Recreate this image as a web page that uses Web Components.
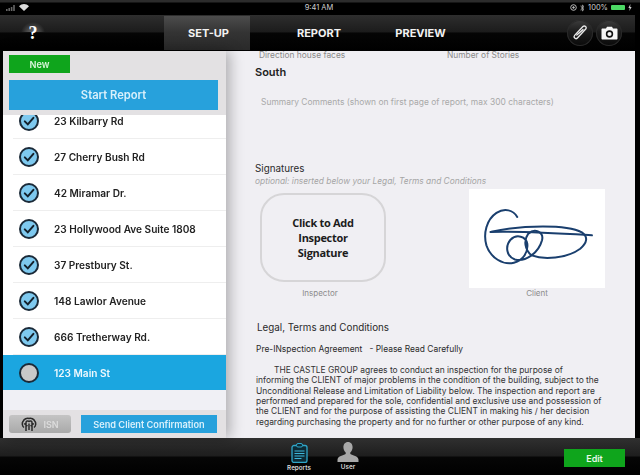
<!DOCTYPE html>
<html>
<head>
<meta charset="utf-8">
<style>
  html, body { margin: 0; height: 100%; background: #000; overflow: hidden; }
  body { font-family: Inter, "Liberation Sans", sans-serif; }
</style>
</head>
<body>
<inspection-app></inspection-app>
<script>
class StatusBar extends HTMLElement {
  constructor() {
    super();
    this.attachShadow({ mode: 'open' });
    this.shadowRoot.innerHTML = /* html */ `
    <style>
      :host {
        display: grid;
        grid-template-columns: 1fr auto 1fr;
        align-items: center;
        height: 15px;
        padding: 0 8px 0 6px;
        box-sizing: border-box;
        background: linear-gradient(#2c2c2c 0, #2c2c2c 2px, #000 3px);
        color: #cfcfcf;
        font-size: 7.5px;
      }
      .left, .right { display: flex; align-items: center; }
      .left { gap: 2px; }
      .right { justify-content: flex-end; gap: 3px; }
      .batt { width: 14px; height: 5px; background: #4cd964; border-radius: 1px; }
    </style>
    <div class="left">
      <svg width="11" height="6" viewBox="0 0 11 6" fill="#666"><rect x="0" y="4" width="1.6" height="2"/><rect x="2.4" y="3" width="1.6" height="3"/><rect x="4.8" y="2" width="1.6" height="4"/><rect x="7.2" y="0" width="1.6" height="6"/></svg>
      <svg width="10" height="7" viewBox="0 0 10 7"><path d="M5 7 0 2.2C3-.7 7-.7 10 2.2Z" fill="#ddd"/></svg>
    </div>
    <span>9:41 AM</span>
    <div class="right">
      <svg width="7" height="7" viewBox="0 0 7 7" fill="none" stroke="#bbb"><circle cx="3.5" cy="3.5" r="2.8"/><circle cx="3.5" cy="3.5" r=".8" fill="#bbb"/></svg>
      <svg width="5" height="8" viewBox="0 0 5 8" fill="none" stroke="#bbb" stroke-width=".8"><path d="M.5 2 4 5.4 2.3 7V1L4 2.6.5 6"/></svg>
      <span>100%</span>
      <div class="batt"></div>
      <svg width="4" height="7" viewBox="0 0 4 7" fill="#ccc"><path d="M2.4 0 .4 4h1.3L1.4 7 3.6 3H2.2Z"/></svg>
    </div>
    `;
  }
}
customElements.define('status-bar', StatusBar);

class NavBar extends HTMLElement {
  constructor() {
    super();
    this.attachShadow({ mode: 'open' });
    this.shadowRoot.innerHTML = /* html */ `
    <style>
      :host {
        display: flex;
        align-items: stretch;
        height: 36px;
        margin-right: 5px;
        background: linear-gradient(#2e2e2e 0, #1c1c1c 47%, #050505 50%, #000 100%);
        color: #f2f2f2;
        font-size: 11px;
        font-weight: 700;
      }
      .help {
        width: 66px;
        display: flex;
        align-items: center;
        justify-content: center;
        padding-top: 1px;
        box-sizing: border-box;
        color: #fff;
        font: bold 18px "Liberation Serif", serif;
        background: radial-gradient(ellipse 12px 11px at 50% 18px, #6a6a6a 0, #444 55%, transparent 100%) no-repeat 0 0 / 100% 17px;
      }
      .tabs { display: flex; margin-left: 98px; padding-top: 1px; }
      .tab {
        display: flex;
        align-items: center;
        justify-content: center;
        height: 34px;
      }
      .on { width: 86px; padding-left: 3px; box-sizing: border-box; background: linear-gradient(#4c4c4c, #333 50%, #2a2a2a); }
      .report { width: 138px; }
      .preview { width: 65px; }
      .tools { margin-left: auto; display: flex; align-items: center; gap: 3px; padding-right: 13px; }
      .round {
        width: 26px;
        height: 26px;
        border-radius: 50%;
        background: linear-gradient(#3d3d3d, #1c1c1c 45%, #0a0a0a);
        box-shadow: inset 0 0 0 1px #2a2a2a;
        display: flex;
        align-items: center;
        justify-content: center;
      }
    </style>
    <div class="help">?</div>
    <div class="tabs">
      <div class="tab on">SET-UP</div>
      <div class="tab report">REPORT</div>
      <div class="tab preview">PREVIEW</div>
    </div>
    <div class="tools">
      <div class="round">
        <svg width="18" height="18" viewBox="0 0 18 18" fill="none" stroke="#e8e8e8" stroke-width="1.4" stroke-linecap="round"><path d="M12.6 2.8 3.4 10.8c-1.900 1.700.5 4.500 2.500 2.800l9.200-8c1.700-1.500-.6-4.100-2.500-2.800Z" transform="rotate(-6 9 9)"/><path d="M5.800 11 12 5.600"/></svg>
      </div>
      <div class="round">
        <svg width="17" height="14" viewBox="0 0 17 14"><path d="M1.500 2.500H5L6 .8h5l1 1.700h3.500c.6 0 1 .4 1 1v9c0 .6-.4 1-1 1h-14c-.6 0-1-.4-1-1v-9c0-.6.4-1 1-1Z" fill="#f6f6f6"/><circle cx="8.500" cy="8" r="3.700" fill="#111"/><circle cx="8.500" cy="8" r="2.100" fill="#f6f6f6"/></svg>
      </div>
    </div>
    `;
  }
}
customElements.define('nav-bar', NavBar);

class AddressRow extends HTMLElement {
  constructor() {
    super();
    this.attachShadow({ mode: 'open' });
    this.shadowRoot.innerHTML = /* html */ `
    <style>
      :host {
        display: flex;
        align-items: center;
        height: 36px;
        flex: none;
        box-sizing: border-box;
        padding-left: 16px;
        gap: 15px;
        position: relative;
        font-size: 10.1px;
        font-weight: 600;
        color: #222;
      }
      :host::after {
        content: "";
        position: absolute;
        left: 10px;
        right: 0;
        bottom: 0;
        height: 1px;
        background: #eeeeee;
      }
      :host([active]) { background: #1ba6e0; color: #eef8fd; height: 35px; }
      :host([active])::after { display: none; }
      svg { flex: none; }
    </style>
    <svg width="20" height="20" viewBox="0 0 20 20">
      <circle cx="10" cy="10" r="9" fill="${this.hasAttribute('active') ? '#c9c9c9' : '#7ec9ef'}" stroke="#1b2a38" stroke-width="2"/>
      ${this.hasAttribute('active') ? '' : '<path d="M5.800 10.400 8.800 13.400 14.400 6.800" fill="none" stroke="#14212c" stroke-width="2" stroke-linecap="round"/>'}
    </svg>
    <slot></slot>
    `;
  }
}
customElements.define('address-row', AddressRow);

class ReportSidebar extends HTMLElement {
  constructor() {
    super();
    this.attachShadow({ mode: 'open' });
    this.shadowRoot.innerHTML = /* html */ `
    <style>
      :host {
        display: flex;
        flex-direction: column;
        width: 223px;
        flex: none;
        background: #e3e1e3;
        box-shadow: 4px 0 13px rgba(0, 0, 0, 0.28);
        position: relative;
        font-weight: 600;
      }
      .head { padding: 4px 8px 5px 6px; height: 64px; box-sizing: border-box; }
      .new {
        width: 61px;
        height: 18px;
        background: #0fa51c;
        color: #d8f5da;
        font-size: 9.2px;
        display: flex;
        align-items: center;
        justify-content: center;
      }
      .start {
        margin-top: 7px;
        height: 30px;
        background: #27a1dc;
        color: #d9f0fb;
        font-size: 11.2px;
        display: flex;
        align-items: center;
        justify-content: center;
      }
      .list {
        height: 295px;
        background: #f0f0f5;
        overflow: hidden;
        display: flex;
        flex-direction: column;
      }
      .rows { background: #fff; margin-top: -12px; }
      .foot {
        flex: 1;
        display: flex;
        align-items: center;
        gap: 10px;
        padding: 0 9px 0 6px;
      }
      .isn {
        width: 62px;
        height: 18px;
        border-radius: 3px;
        background: linear-gradient(#c4c4c4, #a9a9a9);
        color: #dcdcdc;
        font-size: 9px;
        display: flex;
        align-items: center;
        justify-content: center;
        gap: 6px;
      }
      .send {
        flex: 1;
        height: 18px;
        background: #27a1dc;
        color: #d9f0fb;
        font-size: 9.2px;
        white-space: nowrap;
        display: flex;
        align-items: center;
        justify-content: center;
      }
    </style>
    <div class="head">
      <div class="new">New</div>
      <div class="start">Start Report</div>
    </div>
    <div class="list"><div class="rows"><slot></slot></div></div>
    <div class="foot">
      <div class="isn">
        <svg width="16" height="15" viewBox="0 0 16 15" fill="none" stroke="#2a2a2a" stroke-width="1.5"><path d="M3 10.500C1 9 .8 6 2 4.500 3 2 6 .8 8 1.500 10 .8 13 2 14 4.500 15.200 6 15 9 13 10.500"/><path d="M5 14V5.500C5 3.800 7 3.500 8 4.500 9 3.500 11 3.800 11 5.500V14M8 13V6.500M3 6.500 6.500 9M13 6.500 9.500 9"/></svg>
        <span>ISN</span>
      </div>
      <div class="send">Send Client Confirmation</div>
    </div>
    `;
  }
}
customElements.define('report-sidebar', ReportSidebar);

class SignatureBoxes extends HTMLElement {
  constructor() {
    super();
    this.attachShadow({ mode: 'open' });
    this.shadowRoot.innerHTML = /* html */ `
    <style>
      :host {
        display: flex;
        align-items: flex-start;
        margin-top: 2px;
        padding-left: 34px;
        color: #8b8b8b;
        font-size: 8px;
        line-height: 10px;
        text-align: center;
      }
      .col { display: flex; flex-direction: column; align-items: center; }
      .ins { width: 126px; margin-top: 4px; }
      .cli { width: 136px; margin-left: 83px; }
      .add {
        width: 126px;
        height: 89px;
        box-sizing: border-box;
        border: 2px solid #d6d5d7;
        border-radius: 24px;
        display: flex;
        align-items: center;
        justify-content: center;
        color: #1c1c1c;
        font: bold 11px/15px "Open Sans", sans-serif;
        letter-spacing: -0.3px;
      }
      .sig { width: 136px; height: 99px; background: #fff; display: block; }
      .ins span { margin-top: 6px; padding-right: 6px; }
    </style>
    <div class="col ins">
      <div class="add">Click to Add<br>Inspector<br>Signature</div>
      <span>Inspector</span>
    </div>
    <div class="col cli">
      <svg class="sig" viewBox="718 117 406 295" fill="none" stroke="#1a3f6e" stroke-width="6" stroke-linecap="round">
        <path d="M862 200C850 180 825 172 800 188 770 208 760 250 770 285 782 322 820 345 852 337 880 330 895 305 892 280 888 258 860 250 842 268 825 288 830 318 855 327 885 335 925 310 936 270 942 245 915 232 895 250 880 270 885 300 905 315 940 328 1010 325 1050 295 1070 278 1075 260 1055 246 1010 222 880 224 785 244"/>
        <path d="M782 245C870 242 1000 250 1085 255"/>
      </svg>
      <span>Client</span>
    </div>
    `;
  }
}
customElements.define('signature-boxes', SignatureBoxes);

class SetupForm extends HTMLElement {
  constructor() {
    super();
    this.attachShadow({ mode: 'open' });
    this.shadowRoot.innerHTML = /* html */ `
    <style>
      :host {
        display: block;
        flex: 1;
        background: #f0eff3;
        overflow: hidden;
        color: #2a2a2a;
      }
      .clip { display: flex; margin: 0 0 0 33px; height: 10px; line-height: 10px; font-size: 8.4px; color: #8a8a8a; transform: translateY(-1px); overflow: hidden; }
      .clip span { width: 188px; }
      .south { margin: 4px 0 0 29px; font-size: 11px; font-weight: 600; line-height: 14px; color: #222; }
      .summary { margin: 17px 0 0 35px; font-size: 8.45px; line-height: 12px; color: #a9a9a9; }
      .sig-title { margin: 54px 0 0 29px; font-size: 9.8px; line-height: 13px; }
      .optional { margin: 0 0 0 29px; font-size: 8.4px; line-height: 12px; font-style: italic; color: #a5a5a5; }
      .legal { margin: 23px 0 0 31px; font-size: 9.8px; line-height: 14px; }
      .pre { margin: 8px 0 0 30px; font-size: 8.45px; line-height: 12px; white-space: pre; }
      .body { margin: 10px 0 0 30px; font-size: 8.45px; line-height: 10.35px; white-space: nowrap; color: #333; }
      .body span { padding-left: 18px; }
    </style>
    <div class="clip"><span>Direction house faces</span><span>Number of Stories</span></div>
    <div class="south">South</div>
    <div class="summary">Summary Comments (shown on first page of report, max 300 characters)</div>
    <div class="sig-title">Signatures</div>
    <div class="optional">optional: inserted below your Legal, Terms and Conditions</div>
    <signature-boxes></signature-boxes>
    <div class="legal">Legal, Terms and Conditions</div>
    <div class="pre">Pre-INspection Agreement   - Please Read Carefully</div>
    <div class="body"><span>THE CASTLE GROUP agrees to conduct an inspection for the purpose of</span><br>informing the CLIENT of major problems in the condition of the building, subject to the<br>Unconditional Release and Limitation of Liability below. The inspection and report are<br>performed and prepared for the sole, confidential and exclusive use and possession of<br>the CLIENT and for the purpose of assisting the CLIENT in making his / her decision<br>regarding purchasing the property and for no further or other purpose of any kind.</div>
    `;
  }
}
customElements.define('setup-form', SetupForm);

class BottomBar extends HTMLElement {
  constructor() {
    super();
    this.attachShadow({ mode: 'open' });
    this.shadowRoot.innerHTML = /* html */ `
    <style>
      :host {
        display: flex;
        height: 37px;
        background: linear-gradient(#303030 0, #1e1e1e 48%, #060606 52%, #000 100%);
        color: #d8d8d8;
        font-size: 6.3px;
        font-weight: 600;
      }
      .tabs { display: flex; margin-left: 281px; }
      .item { width: 36px; display: flex; flex-direction: column; align-items: center; padding-top: 5px; box-sizing: border-box; height: 37px; }
      .item:last-child { margin-left: 13px; width: 36px; padding-top: 4px; }
      .item svg { flex: none; display: block; }
      .item span { margin-top: 1px; line-height: 8px; }
      .edit {
        margin: 11px 15px 0 auto;
        width: 61px;
        height: 18px;
        background: #0fa51c;
        color: #e8f8ea;
        font-size: 9px;
        display: flex;
        align-items: center;
        justify-content: center;
      }
    </style>
    <div class="tabs">
      <div class="item">
        <svg width="17" height="20" viewBox="0 0 17 20" fill="none"><rect x="1" y="2.500" width="15" height="17" rx="2" stroke="#2fa6c9" stroke-width="1.300" fill="#0d2a35"/><rect x="5.500" y=".5" width="6" height="3.500" rx="1.500" stroke="#2fa6c9" fill="#0d2a35"/><path d="M3.500 8h10M3.500 10.500h10M3.500 13h10M3.500 15.500h7" stroke="#3fb6d9" stroke-width="1.200"/></svg>
        <span>Reports</span>
      </div>
      <div class="item">
        <svg width="22" height="20" viewBox="0 0 22 20"><path d="M11 0c3 0 4.600 2.300 4.600 5.300 0 2.200-1 4.200-2.300 5.300v1.400c2.500 1.300 7.700 2 8.200 5.500v2.500H.5V17.500c.5-3.500 5.700-4.200 8.200-5.500v-1.400C7.400 9.500 6.400 7.500 6.400 5.300 6.400 2.300 8 0 11 0Z" fill="#a8a8a8"/></svg>
        <span>User</span>
      </div>
    </div>
    <div class="edit">Edit</div>
    `;
  }
}
customElements.define('bottom-bar', BottomBar);

class InspectionApp extends HTMLElement {
  constructor() {
    super();
    this.attachShadow({ mode: 'open' });
    const addresses = ['23 Kilbarry Rd', '27 Cherry Bush Rd', '42 Miramar Dr.', '23 Hollywood Ave Suite 1808', '37 Prestbury St.', '148 Lawlor Avenue', '666 Tretherway Rd.'];
    this.shadowRoot.innerHTML = /* html */ `
    <style>
      :host { display: flex; flex-direction: column; width: 640px; height: 475px; overflow: hidden; filter: blur(0.4px); }
      .middle { display: flex; height: 387px; margin: 0 5px 0 3px; }
    </style>
    <status-bar></status-bar>
    <nav-bar></nav-bar>
    <div class="middle">
      <report-sidebar>
        ${addresses.map((a) => `<address-row>${a}</address-row>`).join('')}
        <address-row active>123 Main St</address-row>
      </report-sidebar>
      <setup-form></setup-form>
    </div>
    <bottom-bar></bottom-bar>
    `;
  }
}
customElements.define('inspection-app', InspectionApp);
</script>
</body>
</html>
